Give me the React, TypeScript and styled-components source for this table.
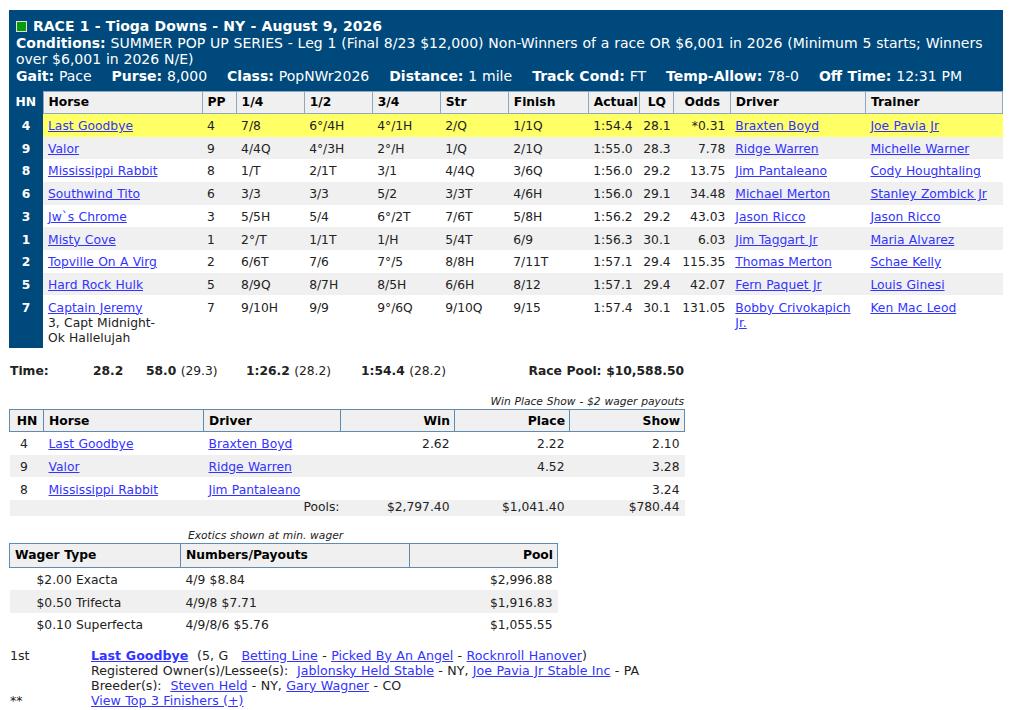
import React from 'react';
import styled, { createGlobalStyle } from 'styled-components';

const colors = {
  navy: '#00497c',
  link: '#3333ff',
  text: '#222222',
  stripe: '#f0f0f0',
  winner: '#ffff66',
  headBorder: '#8ea8c0',
  gridBorder: '#5f8bb2',
  flag: '#0a9a0a',
};

const GlobalStyle = createGlobalStyle`
  body {
    margin: 0;
    background: #fff;
    color: ${colors.text};
    font-family: "DejaVu Sans", Verdana, sans-serif;
    font-size: 12.3px;
    word-spacing: 0.4px;
  }
  a {
    color: ${colors.link};
    text-decoration: underline;
  }
`;

const Page = styled.div`
  display: flex;
  flex-direction: column;
  align-items: flex-start;
  padding: 10px 0 0 9px;
`;

const RaceCard = styled.div`
  width: 994px;
`;

const RaceHeader = styled.div`
  background: ${colors.navy};
  color: #fff;
  padding: 8px 7px 6px;
  font-size: 14px;
  line-height: 16.7px;
`;

const Title = styled.div`
  display: flex;
  align-items: center;
  gap: 6px;
  font-weight: bold;
`;

const Flag = styled.span`
  display: inline-block;
  width: 9px;
  height: 9px;
  background: ${colors.flag};
  border: 1px solid #d9e6d9;
`;

const Label = styled.b`
  font-weight: bold;
`;

const Facts = styled.div`
  display: flex;
  gap: 20px;
`;

const Table = styled.table<{ $width: number }>`
  width: ${p => p.$width}px;
  border-collapse: collapse;
  table-layout: fixed;
`;

const Col = styled.col<{ $w: number }>`
  width: ${p => p.$w}px;
`;

const HeadCell = styled.th<{ $align?: string; $edge?: string; $h?: number }>`
  height: ${p => p.$h || 21}px;
  padding: 0 4px 0 5px;
  background: ${colors.stripe};
  border: 1px solid ${p => p.$edge || colors.headBorder};
  color: #000;
  font-weight: bold;
  text-align: ${p => p.$align || 'left'};
  vertical-align: middle;
  white-space: nowrap;
`;

const HnHead = styled.th`
  height: 21px;
  padding: 0;
  background: ${colors.navy};
  color: #fff;
  font-weight: bold;
  text-align: center;
`;

const Row = styled.tr<{ $bg?: string }>`
  background: ${p => p.$bg || '#fff'};
`;

const Cell = styled.td<{ $align?: string; $pad?: number }>`
  padding: 5.3px 5px 2.4px ${p => (p.$pad !== undefined ? p.$pad : 5)}px;
  line-height: 15px;
  vertical-align: top;
  text-align: ${p => p.$align || 'left'};
`;

const HnCell = styled.td`
  padding: 5.3px 0 2.4px;
  line-height: 15px;
  vertical-align: top;
  text-align: center;
  background: ${colors.navy};
  color: #fff;
  font-weight: bold;
`;

const PoolCell = styled.td<{ $pr?: number }>`
  padding: 0 ${p => (p.$pr !== undefined ? p.$pr : 5)}px 0 5px;
  line-height: 15.5px;
  text-align: right;
`;

const Times = styled.div`
  display: grid;
  grid-template-columns: 83px 53px 100px 115px 1fr auto;
  width: 674px;
  margin: 16px 0 0 1px;
  line-height: 15px;
`;

const Split = styled.span`
  white-space: nowrap;
`;

const Note = styled.div<{ $width: number; $align: string; $indent?: number; $top: number }>`
  width: ${p => p.$width}px;
  margin-top: ${p => p.$top}px;
  padding-left: ${p => p.$indent || 0}px;
  box-sizing: border-box;
  font-size: 10.7px;
  font-style: italic;
  line-height: 14px;
  text-align: ${p => p.$align};
`;

const Summary = styled.div`
  display: grid;
  grid-template-columns: 81px 1fr;
  margin: 12px 0 0 1px;
  font-size: 12.6px;
  line-height: 15px;
`;

const Lines = styled.div`
  display: flex;
  flex-direction: column;
`;

const Strong = styled.a`
  font-weight: bold;
`;

type Finisher = {
  hn: number; horse: string; pp: number; q1: string; q2: string; q3: string; str: string; fin: string;
  actual: string; lq: string; odds: string; driver: string; trainer: string; pedigree?: string[];
};

const finishers: Finisher[] = [
  { hn: 4, horse: 'Last Goodbye', pp: 4, q1: '7/8', q2: '6°/4H', q3: '4°/1H', str: '2/Q', fin: '1/1Q', actual: '1:54.4', lq: '28.1', odds: '*0.31', driver: 'Braxten Boyd', trainer: 'Joe Pavia Jr' },
  { hn: 9, horse: 'Valor', pp: 9, q1: '4/4Q', q2: '4°/3H', q3: '2°/H', str: '1/Q', fin: '2/1Q', actual: '1:55.0', lq: '28.3', odds: '7.78', driver: 'Ridge Warren', trainer: 'Michelle Warner' },
  { hn: 8, horse: 'Mississippi Rabbit', pp: 8, q1: '1/T', q2: '2/1T', q3: '3/1', str: '4/4Q', fin: '3/6Q', actual: '1:56.0', lq: '29.2', odds: '13.75', driver: 'Jim Pantaleano', trainer: 'Cody Houghtaling' },
  { hn: 6, horse: 'Southwind Tito', pp: 6, q1: '3/3', q2: '3/3', q3: '5/2', str: '3/3T', fin: '4/6H', actual: '1:56.0', lq: '29.1', odds: '34.48', driver: 'Michael Merton', trainer: 'Stanley Zombick Jr' },
  { hn: 3, horse: 'Jw`s Chrome', pp: 3, q1: '5/5H', q2: '5/4', q3: '6°/2T', str: '7/6T', fin: '5/8H', actual: '1:56.2', lq: '29.2', odds: '43.03', driver: 'Jason Ricco', trainer: 'Jason Ricco' },
  { hn: 1, horse: 'Misty Cove', pp: 1, q1: '2°/T', q2: '1/1T', q3: '1/H', str: '5/4T', fin: '6/9', actual: '1:56.3', lq: '30.1', odds: '6.03', driver: 'Jim Taggart Jr', trainer: 'Maria Alvarez' },
  { hn: 2, horse: 'Topville On A Virg', pp: 2, q1: '6/6T', q2: '7/6', q3: '7°/5', str: '8/8H', fin: '7/11T', actual: '1:57.1', lq: '29.4', odds: '115.35', driver: 'Thomas Merton', trainer: 'Schae Kelly' },
  { hn: 5, horse: 'Hard Rock Hulk', pp: 5, q1: '8/9Q', q2: '8/7H', q3: '8/5H', str: '6/6H', fin: '8/12', actual: '1:57.1', lq: '29.4', odds: '42.07', driver: 'Fern Paquet Jr', trainer: 'Louis Ginesi' },
  { hn: 7, horse: 'Captain Jeremy', pp: 7, q1: '9/10H', q2: '9/9', q3: '9°/6Q', str: '9/10Q', fin: '9/15', actual: '1:57.4', lq: '30.1', odds: '131.05', driver: 'Bobby Crivokapich Jr.', trainer: 'Ken Mac Leod', pedigree: ['3, Capt Midnight-', 'Ok Hallelujah'] },
];

const chartCols = [34, 159, 34, 68, 68, 68, 68, 80, 51, 34, 57, 135, 137];
const chartHeads: [string, string?][] = [
  ['Horse'], ['PP'], ['1/4'], ['1/2'], ['3/4'], ['Str'], ['Finish'], ['Actual'], ['LQ', 'center'], ['Odds', 'center'], ['Driver'], ['Trainer'],
];

const payouts = [
  { hn: 4, horse: 'Last Goodbye', driver: 'Braxten Boyd', win: '2.62', place: '2.22', show: '2.10' },
  { hn: 9, horse: 'Valor', driver: 'Ridge Warren', win: '', place: '4.52', show: '3.28' },
  { hn: 8, horse: 'Mississippi Rabbit', driver: 'Jim Pantaleano', win: '', place: '', show: '3.24' },
];

const exotics = [
  { type: '$2.00 Exacta', result: '4/9 $8.84', pool: '$2,996.88' },
  { type: '$0.50 Trifecta', result: '4/9/8 $7.71', pool: '$1,916.83' },
  { type: '$0.10 Superfecta', result: '4/9/8/6 $5.76', pool: '$1,055.55' },
];

const stripe = (i: number) => (i % 2 === 1 ? colors.stripe : '#fff');

const noLink = (e: React.MouseEvent) => e.preventDefault();

export default function App() {
  return (
    <Page>
      <GlobalStyle />
      <RaceCard>
        <RaceHeader>
          <Title><Flag />RACE 1 - Tioga Downs - NY - August 9, 2026</Title>
          <div>
            <Label>Conditions:</Label> SUMMER POP UP SERIES - Leg 1 (Final 8/23 $12,000) Non-Winners of a race OR $6,001 in 2026 (Minimum 5 starts; Winners
            <br />
            over $6,001 in 2026 N/E)
          </div>
          <Facts>
            <span><Label>Gait:</Label> Pace</span>
            <span><Label>Purse:</Label> 8,000</span>
            <span><Label>Class:</Label> PopNWr2026</span>
            <span><Label>Distance:</Label> 1 mile</span>
            <span><Label>Track Cond:</Label> FT</span>
            <span><Label>Temp-Allow:</Label> 78-0</span>
            <span><Label>Off Time:</Label> 12:31 PM</span>
          </Facts>
        </RaceHeader>
        <Table $width={994}>
          <colgroup>
            {chartCols.map((w, i) => <Col key={i} $w={w} />)}
          </colgroup>
          <thead>
            <tr>
              <HnHead>HN</HnHead>
              {chartHeads.map(([name, align]) => <HeadCell key={name} $align={align}>{name}</HeadCell>)}
            </tr>
          </thead>
          <tbody>
            {finishers.map((f, i) => (
              <Row key={f.hn} $bg={i === 0 ? colors.winner : stripe(i)}>
                <HnCell>{f.hn}</HnCell>
                <Cell>
                  <a href="#" onClick={noLink}>{f.horse}</a>
                  {f.pedigree && f.pedigree.map(line => <React.Fragment key={line}><br />{line}</React.Fragment>)}
                </Cell>
                <Cell>{f.pp}</Cell>
                <Cell>{f.q1}</Cell>
                <Cell>{f.q2}</Cell>
                <Cell>{f.q3}</Cell>
                <Cell>{f.str}</Cell>
                <Cell>{f.fin}</Cell>
                <Cell>{f.actual}</Cell>
                <Cell $pad={4}>{f.lq}</Cell>
                <Cell $align="right">{f.odds}</Cell>
                <Cell><a href="#" onClick={noLink}>{f.driver}</a></Cell>
                <Cell><a href="#" onClick={noLink}>{f.trainer}</a></Cell>
              </Row>
            ))}
          </tbody>
        </Table>
      </RaceCard>

      <Times>
        <b>Time:</b>
        <b>28.2</b>
        <Split><b>58.0</b> (29.3)</Split>
        <Split><b>1:26.2</b> (28.2)</Split>
        <Split><b>1:54.4</b> (28.2)</Split>
        <b>Race Pool: $10,588.50</b>
      </Times>

      <Note $width={675} $align="right" $top={16}>Win Place Show - $2 wager payouts</Note>
      <Table $width={675}>
        <colgroup>
          {[34, 160, 137, 114, 115, 115].map((w, i) => <Col key={i} $w={w} />)}
        </colgroup>
        <thead>
          <tr>
            <HeadCell $align="center" $edge={colors.gridBorder}>HN</HeadCell>
            <HeadCell $edge={colors.gridBorder}>Horse</HeadCell>
            <HeadCell $edge={colors.gridBorder}>Driver</HeadCell>
            <HeadCell $align="right" $edge={colors.gridBorder}>Win</HeadCell>
            <HeadCell $align="right" $edge={colors.gridBorder}>Place</HeadCell>
            <HeadCell $align="right" $edge={colors.gridBorder}>Show</HeadCell>
          </tr>
        </thead>
        <tbody>
          {payouts.map((p, i) => (
            <Row key={p.hn} $bg={stripe(i)}>
              <Cell $align="center" $pad={0}>{p.hn}</Cell>
              <Cell><a href="#" onClick={noLink}>{p.horse}</a></Cell>
              <Cell><a href="#" onClick={noLink}>{p.driver}</a></Cell>
              <Cell $align="right">{p.win}</Cell>
              <Cell $align="right">{p.place}</Cell>
              <Cell $align="right">{p.show}</Cell>
            </Row>
          ))}
          <Row $bg={colors.stripe}>
            <PoolCell colSpan={3} $pr={1}>Pools:</PoolCell>
            <PoolCell>$2,797.40</PoolCell>
            <PoolCell>$1,041.40</PoolCell>
            <PoolCell>$780.44</PoolCell>
          </Row>
        </tbody>
      </Table>

      <Note $width={548} $align="left" $indent={179} $top={13}>Exotics shown at min. wager</Note>
      <Table $width={548}>
        <colgroup>
          {[171, 229, 148].map((w, i) => <Col key={i} $w={w} />)}
        </colgroup>
        <thead>
          <tr>
            <HeadCell $edge={colors.gridBorder} $h={23}>Wager Type</HeadCell>
            <HeadCell $edge={colors.gridBorder} $h={23}>Numbers/Payouts</HeadCell>
            <HeadCell $align="right" $edge={colors.gridBorder} $h={23}>Pool</HeadCell>
          </tr>
        </thead>
        <tbody>
          {exotics.map((x, i) => (
            <Row key={x.type} $bg={stripe(i)}>
              <Cell $pad={27}>{x.type}</Cell>
              <Cell>{x.result}</Cell>
              <Cell $align="right">{x.pool}</Cell>
            </Row>
          ))}
        </tbody>
      </Table>

      <Summary>
        <span>1st</span>
        <Lines>
          <span>
            <Strong href="#" onClick={noLink}>Last Goodbye</Strong>{'\u00a0\u00a0'}(5, G{'\u00a0\u00a0 '}
            <a href="#" onClick={noLink}>Betting Line</a> - <a href="#" onClick={noLink}>Picked By An Angel</a> - <a href="#" onClick={noLink}>Rocknroll Hanover</a>)
          </span>
          <span>
            Registered Owner(s)/Lessee(s):{'\u00a0 '}<a href="#" onClick={noLink}>Jablonsky Held Stable</a> - NY, <a href="#" onClick={noLink}>Joe Pavia Jr Stable Inc</a> - PA
          </span>
          <span>
            Breeder(s):{'\u00a0 '}<a href="#" onClick={noLink}>Steven Held</a> - NY, <a href="#" onClick={noLink}>Gary Wagner</a> - CO
          </span>
        </Lines>
        <span>**</span>
        <span><a href="#" onClick={noLink}>View Top 3 Finishers (+)</a></span>
      </Summary>
    </Page>
  );
}
